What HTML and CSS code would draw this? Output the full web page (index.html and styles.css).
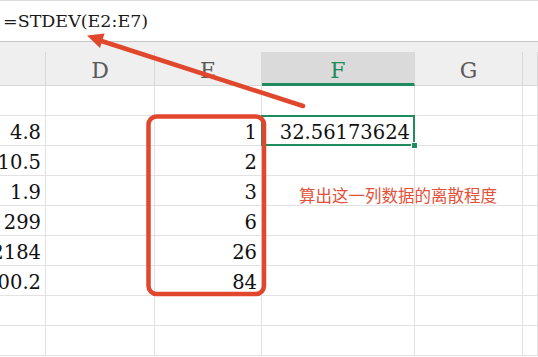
FILE: index.html
```html
<!DOCTYPE html>
<html lang="zh-CN">
<head>
  <meta charset="UTF-8">
  <meta name="viewport" content="width=device-width, initial-scale=1.0">
  <title>STDEV</title>
  <link rel="stylesheet" href="styles.css">
</head>
<body>
  <div class="formula-bar">=STDEV(E2:E7)</div>
  <div class="header-strip"></div>

  <div class="sheet">
    <div class="head"></div>
    <div class="head">D</div>
    <div class="head">E</div>
    <div class="head active">F</div>
    <div class="head">G</div>
    <div class="head"></div>

    <div class="cell"></div><div class="cell"></div><div class="cell"></div><div class="cell"></div><div class="cell"></div><div class="cell"></div>

    <div class="cell">4.8</div><div class="cell"></div><div class="cell">1</div><div class="cell selected">32.56173624</div><div class="cell"></div><div class="cell"></div>

    <div class="cell">10.5</div><div class="cell"></div><div class="cell">2</div><div class="cell"></div><div class="cell"></div><div class="cell"></div>

    <div class="cell">1.9</div><div class="cell"></div><div class="cell">3</div><div class="cell"></div><div class="cell"></div><div class="cell"></div>

    <div class="cell">299</div><div class="cell"></div><div class="cell">6</div><div class="cell"></div><div class="cell"></div><div class="cell"></div>

    <div class="cell">2184</div><div class="cell"></div><div class="cell">26</div><div class="cell"></div><div class="cell"></div><div class="cell"></div>

    <div class="cell">100.2</div><div class="cell"></div><div class="cell">84</div><div class="cell"></div><div class="cell"></div><div class="cell"></div>

    <div class="cell"></div><div class="cell"></div><div class="cell"></div><div class="cell"></div><div class="cell"></div><div class="cell"></div>

    <div class="cell"></div><div class="cell"></div><div class="cell"></div><div class="cell"></div><div class="cell"></div><div class="cell"></div>
  </div>

  <!-- annotations drawn over the sheet -->
  <svg class="marks" width="538" height="357" viewBox="0 0 538 357">
    <rect x="148.5" y="116.5" width="115.5" height="177.5" rx="8" fill="none" stroke="#e0472d" stroke-width="4.5"/>
    <line x1="303" y1="106" x2="100" y2="40.5" stroke="#e0472d" stroke-width="4.5" stroke-linecap="round"/>
    <polygon points="87,35.5 104.5,33.5 100,48" fill="#e0472d"/>
  </svg>
  <div class="note">算出这一列数据的离散程度</div>
</body>
</html>
```

FILE: styles.css
```css
body {
    margin: 0;
    width: 538px;
    height: 357px;
    overflow: hidden;
    position: relative;
    background-color: #fff;
    font-family: "DejaVu Serif", serif;
    color: #111;
}

.formula-bar {
    height: 40px;
    box-sizing: content-box;
    border-top: 1px solid #dcdcdc;
    border-bottom: 1px solid #c6c6c6;
    padding-left: 3px;
    font-size: 17.5px;
    line-height: 41px;
    color: #1a1a1a;
}

.header-strip {
    height: 10px;
    background-color: #efefef;
}

.sheet {
    display: grid;
    grid-template-columns: 46px 109px 107px 153px 108px 1fr;
}

.head {
    height: 34px;
    box-sizing: border-box;
    padding-top: 4px;
    background-color: #efefef;
    border-right: 1px solid #d8d8d8;
    border-bottom: 1px solid #d8d8d8;
    text-align: center;
    font-size: 22px;
    line-height: 29px;
    color: #5a5a5a;
}

.head.active {
    background-color: #dadada;
    border-bottom: 3px solid #1e8c5e;
    color: #1e8c5e;
}

.cell {
    height: 30px;
    box-sizing: border-box;
    padding: 5px 4px 0 0;
    border-right: 1px solid #e2e2e2;
    border-bottom: 1px solid #e2e2e2;
    display: flex;
    justify-content: flex-end;
    overflow: hidden;
    white-space: nowrap;
    font-size: 19.5px;
    line-height: 24px;
}

.selected {
    position: relative;
    overflow: visible;
}

.selected::after {
    content: "";
    position: absolute;
    left: -1px;
    top: -1px;
    right: -1px;
    bottom: -1px;
    border: 2px solid #1e8c5e;
}

.selected::before {
    content: "";
    position: absolute;
    right: -4px;
    bottom: -4px;
    width: 5px;
    height: 5px;
    background-color: #1e8c5e;
    border: 1px solid #fff;
    z-index: 2;
}

.marks {
    position: absolute;
    top: 0;
    left: 0;
    pointer-events: none;
}

.note {
    position: absolute;
    left: 299px;
    top: 185px;
    font-family: "Noto Sans CJK SC", sans-serif;
    font-size: 16.5px;
    line-height: 20px;
    color: #e4513a;
}
```
